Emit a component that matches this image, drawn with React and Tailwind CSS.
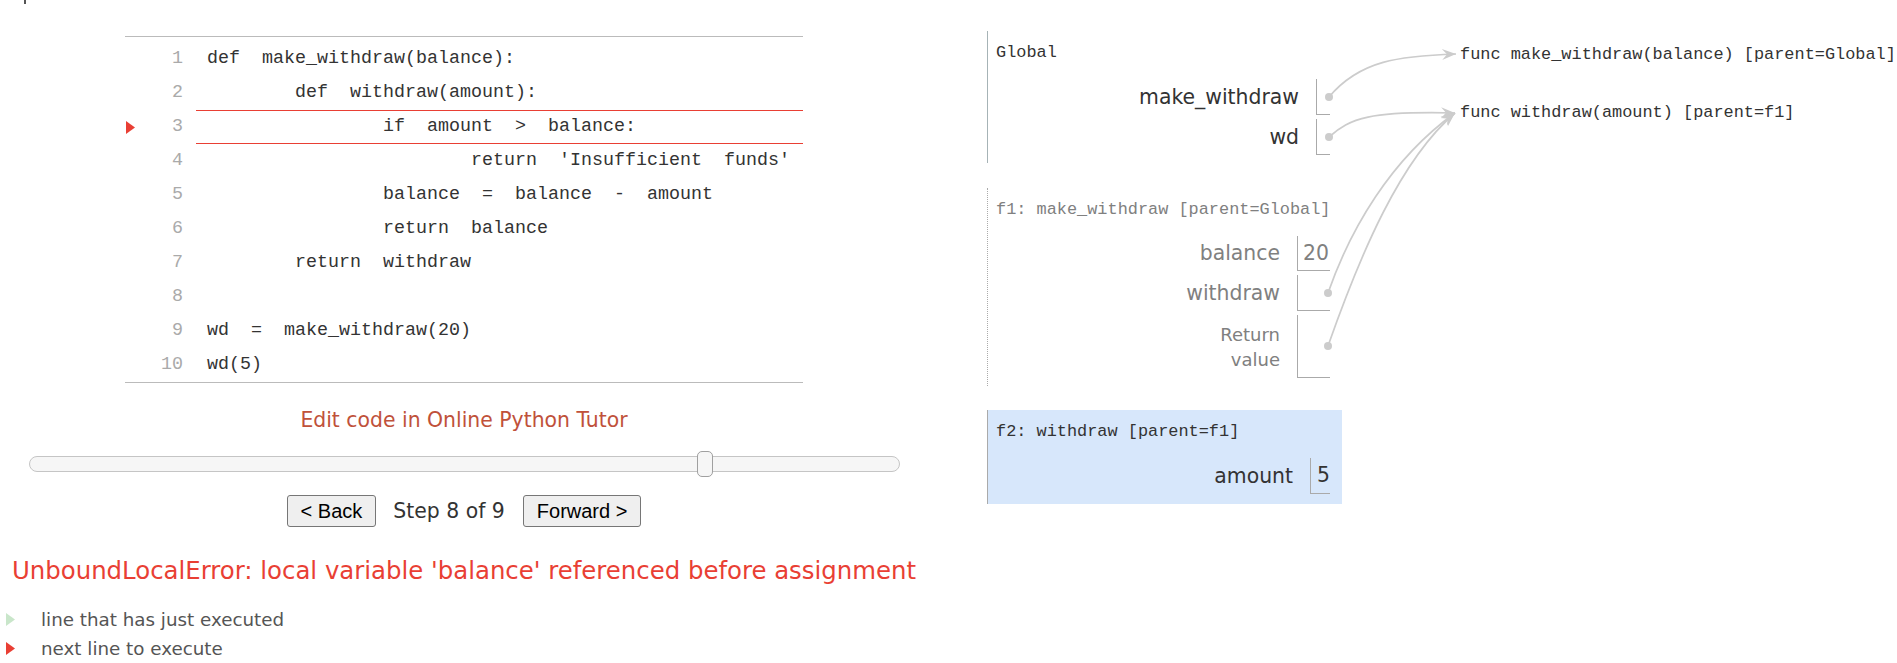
import React from 'react';

const mono = "font-['Liberation_Mono',monospace]";
const sans = "font-['DejaVu_Sans',sans-serif]";

const codeLines = [
  'def  make_withdraw(balance):',
  '        def  withdraw(amount):',
  '                if  amount  >  balance:',
  "                        return  'Insufficient  funds'",
  '                balance  =  balance  -  amount',
  '                return  balance',
  '        return  withdraw',
  '',
  'wd  =  make_withdraw(20)',
  'wd(5)',
];

function Triangle({ color }) {
  return (
    <svg width="10" height="13" viewBox="0 0 10 13">
      <path d="M0 0L9 6.5L0 13Z" fill={color} />
    </svg>
  );
}

function CodePane() {
  return (
    <div className="mt-[32px] mx-auto w-[678px] border-y border-[#bbbbbb] pt-[5px]">
      {codeLines.map((line, i) => {
        const current = i === 2;
        return (
          <div key={i} className={`flex h-[34px] items-center ${mono} text-[18.33px]`}>
            <div className="w-[12px] pl-[1px] flex items-center">
              {current && <Triangle color="#e93f34" />}
            </div>
            <div className="w-[59px] pr-[13px] text-right text-[#aaaaaa] leading-[34px]">{i + 1}</div>
            <div
              className={`flex-1 h-full pl-[11px] whitespace-pre text-[#333333] ${
                current ? 'border-y border-[#e93f34] leading-[32px]' : 'leading-[34px]'
              }`}
            >
              {line}
            </div>
          </div>
        );
      })}
    </div>
  );
}

function Controls() {
  return (
    <>
      <div className={`mt-[23px] text-center leading-[28px] text-[20.4px] text-[#c0513a] ${sans}`}>
        Edit code in Online Python Tutor
      </div>
      <div className="mt-[17px] mx-auto w-[871px] h-[26px] relative flex items-center">
        <div className="w-full h-[16px] rounded-[8px] border border-[#c5c5c5] bg-[#f6f6f6]" />
        <div className="absolute left-[668px] top-0 w-[16px] h-[26px] rounded-[5px] border border-[#a0a0a0] bg-[#f6f6f6]" />
      </div>
      <div className="mt-[18px] flex justify-center items-center gap-[17px]">
        <button className="h-[32px] px-[13px] border border-[#767676] rounded-[3px] bg-[#efefef] text-[20px] text-black font-['Liberation_Sans',sans-serif]">
          &lt; Back
        </button>
        <span className={`${sans} text-[20.4px] text-[#333333] mr-[1px]`}>Step 8 of 9</span>
        <button className="h-[32px] px-[13px] border border-[#767676] rounded-[3px] bg-[#efefef] text-[20px] text-black font-['Liberation_Sans',sans-serif]">
          Forward &gt;
        </button>
      </div>
      <div className={`mt-[28px] text-center leading-[32px] text-[24.4px] text-[#e93f34] ${sans}`}>
        UnboundLocalError: local variable 'balance' referenced before assignment
      </div>
      <div className={`mt-[18px] ${sans} text-[18.3px] text-[#555555]`}>
        <div className="flex items-center h-[29px] pl-[6px] gap-[25px]">
          <Triangle color="#c9e6ca" />
          <span>line that has just executed</span>
        </div>
        <div className="flex items-center h-[29px] pl-[6px] gap-[25px]">
          <Triangle color="#e93f34" />
          <span>next line to execute</span>
        </div>
      </div>
    </>
  );
}

function VarRow({ name, value, cellW, h, dim, small }) {
  return (
    <div className="flex justify-end items-center">
      <div
        className={`pr-[17px] text-right ${small ? 'text-[18px] leading-[25px]' : 'text-[20.4px]'} ${
          dim ? 'text-[#808080]' : 'text-[#333333]'
        }`}
      >
        {name}
      </div>
      <div
        className={`${cellW} ${h} border-l border-b border-[#aaaaaa] flex items-center pl-[5px] text-[20.4px] ${
          dim ? 'text-[#808080]' : 'text-[#333333]'
        }`}
      >
        {value}
      </div>
    </div>
  );
}

function Frame({ label, className, labelColor, children }) {
  return (
    <div className={`w-[355px] pt-[10px] pb-[8px] pl-[8px] pr-[12px] ${className}`}>
      <div className={`h-[24px] leading-[24px] ${mono} text-[16.9px] whitespace-nowrap ${labelColor}`}>{label}</div>
      <div className={`mt-[14px] flex flex-col gap-[4px] ${sans}`}>{children}</div>
    </div>
  );
}

function Visualizer() {
  return (
    <div className="ml-[59px] flex">
      <div className="pt-[31px] flex flex-col">
        <Frame label="Global" className="border-l border-[#a6b3b6]" labelColor="text-[#333333]">
          <VarRow name="make_withdraw" cellW="w-[14px]" h="h-[36px]" />
          <VarRow name="wd" cellW="w-[14px]" h="h-[36px]" />
        </Frame>
        <Frame
          label="f1: make_withdraw [parent=Global]"
          className="mt-[25px] border-l border-dotted border-[#aaaaaa]"
          labelColor="text-[#808080]"
        >
          <VarRow name="balance" value="20" cellW="w-[33px]" h="h-[35px]" dim />
          <VarRow name="withdraw" cellW="w-[33px]" h="h-[36px]" dim />
          <VarRow
            name={
              <>
                Return
                <br />
                value
              </>
            }
            cellW="w-[33px]"
            h="h-[63px]"
            dim
            small
          />
        </Frame>
        <Frame
          label="f2: withdraw [parent=f1]"
          className="mt-[24px] border-l border-[#aaaaaa] bg-[#d7e7fb] pb-[10px]"
          labelColor="text-[#333333]"
        >
          <VarRow name="amount" value="5" cellW="w-[20px] pl-[6px]" h="h-[36px]" />
        </Frame>
      </div>
      <div className={`ml-[118px] pt-[43px] ${mono} text-[16.9px] text-[#333333] whitespace-nowrap`}>
        <div className="h-[24px] leading-[24px]">func make_withdraw(balance) [parent=Global]</div>
        <div className="mt-[34px] h-[24px] leading-[24px]">func withdraw(amount) [parent=f1]</div>
      </div>
    </div>
  );
}

function Pointers() {
  const stroke = '#cccccc';
  return (
    <svg className="absolute left-0 top-0 pointer-events-none" width="1897" height="663">
      <defs>
        <marker
          id="head"
          viewBox="-15 -7 16 14"
          refX="0"
          refY="0"
          markerWidth="16"
          markerHeight="14"
          markerUnits="userSpaceOnUse"
          orient="auto"
        >
          <path d="M0,0 L-14,-5.5 L-9,0 L-14,5.5 Z" fill={stroke} />
        </marker>
      </defs>
      <g fill="none" stroke={stroke} strokeWidth="1.7">
        <path d="M1329,97 C1360,60 1400,56 1456,54" markerEnd="url(#head)" />
        <path d="M1329,137 C1350,118 1370,111 1455,113" markerEnd="url(#head)" />
        <path d="M1328,293 C1350,230 1390,160 1455,113" markerEnd="url(#head)" />
        <path d="M1328,346 C1360,255 1400,160 1455,113" markerEnd="url(#head)" />
      </g>
      <g fill={stroke}>
        <circle cx="1329" cy="97" r="4" />
        <circle cx="1329" cy="137" r="4" />
        <circle cx="1328" cy="293" r="4" />
        <circle cx="1328" cy="346" r="4" />
      </g>
    </svg>
  );
}

export default function App() {
  return (
    <div className="relative w-[1897px] h-[663px] overflow-hidden bg-white flex">
      <div className="w-[928px] shrink-0 flex flex-col">
        <div className="h-[4px] pl-[24px]">
          <div className="w-[2px] h-[4px] bg-[#555555]" />
        </div>
        <CodePane />
        <Controls />
      </div>
      <Visualizer />
      <Pointers />
    </div>
  );
}
